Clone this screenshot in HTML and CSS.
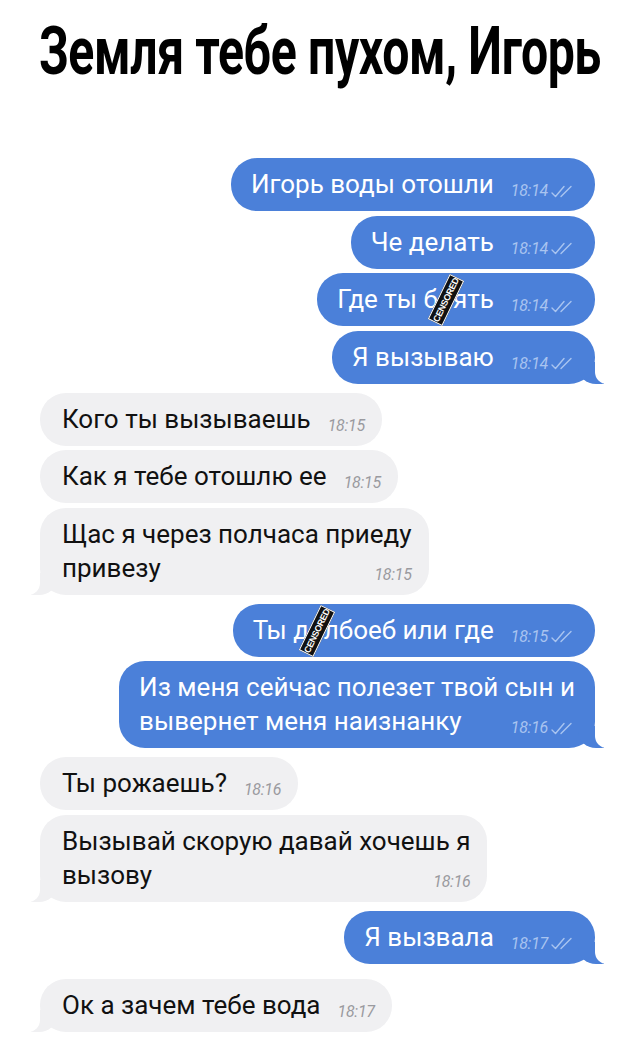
FILE: index.html
```html
<!DOCTYPE html>
<html lang="ru">
<head>
  <meta charset="UTF-8" />
  <meta name="viewport" content="width=device-width, initial-scale=1.0" />
  <title>Земля тебе пухом, Игорь</title>
  <link rel="stylesheet" href="styles.css">
</head>
<body>
  <div class="title-box">
    <h1 class="title">Земля тебе пухом, Игорь</h1>
  </div>

  <div class="chat">
    <div class="group out">
      <div class="bubble">
        <div class="line"><span class="text">Игорь воды отошли</span><span class="time">18:14<svg class="ticks" viewBox="0 0 24 13"><path d="M1 8 L4.5 11.5 L13 1.5 M10 11.5 L20 1.5"/></svg></span></div>
      </div>
      <div class="bubble">
        <div class="line"><span class="text">Че делать</span><span class="time">18:14<svg class="ticks" viewBox="0 0 24 13"><path d="M1 8 L4.5 11.5 L13 1.5 M10 11.5 L20 1.5"/></svg></span></div>
      </div>
      <div class="bubble">
        <div class="line"><span class="text">Где ты б<span class="censor-wrap">л<span class="censored">CENSORED</span></span>ять</span><span class="time">18:14<svg class="ticks" viewBox="0 0 24 13"><path d="M1 8 L4.5 11.5 L13 1.5 M10 11.5 L20 1.5"/></svg></span></div>
      </div>
      <div class="bubble tail">
        <div class="line"><span class="text">Я вызываю</span><span class="time">18:14<svg class="ticks" viewBox="0 0 24 13"><path d="M1 8 L4.5 11.5 L13 1.5 M10 11.5 L20 1.5"/></svg></span></div>
      </div>
    </div>

    <div class="group in">
      <div class="bubble">
        <div class="line"><span class="text">Кого ты вызываешь</span><span class="time">18:15</span></div>
      </div>
      <div class="bubble">
        <div class="line"><span class="text">Как я тебе отошлю ее</span><span class="time">18:15</span></div>
      </div>
      <div class="bubble tail">
        <div class="line"><span class="text">Щас я через полчаса приеду</span></div>
        <div class="line"><span class="text">привезу</span><span class="time">18:15</span></div>
      </div>
    </div>

    <div class="group out">
      <div class="bubble">
        <div class="line"><span class="text">Ты д<span class="censor-wrap">о<span class="censored">CENSORED</span></span>лбоеб или где</span><span class="time">18:15<svg class="ticks" viewBox="0 0 24 13"><path d="M1 8 L4.5 11.5 L13 1.5 M10 11.5 L20 1.5"/></svg></span></div>
      </div>
      <div class="bubble tail">
        <div class="line"><span class="text">Из меня сейчас полезет твой сын и</span></div>
        <div class="line"><span class="text">вывернет меня наизнанку</span><span class="time">18:16<svg class="ticks" viewBox="0 0 24 13"><path d="M1 8 L4.5 11.5 L13 1.5 M10 11.5 L20 1.5"/></svg></span></div>
      </div>
    </div>

    <div class="group in">
      <div class="bubble">
        <div class="line"><span class="text">Ты рожаешь?</span><span class="time">18:16</span></div>
      </div>
      <div class="bubble tail">
        <div class="line"><span class="text">Вызывай скорую давай хочешь я</span></div>
        <div class="line"><span class="text">вызову</span><span class="time">18:16</span></div>
      </div>
    </div>

    <div class="group out">
      <div class="bubble tail">
        <div class="line"><span class="text">Я вызвала</span><span class="time">18:17<svg class="ticks" viewBox="0 0 24 13"><path d="M1 8 L4.5 11.5 L13 1.5 M10 11.5 L20 1.5"/></svg></span></div>
      </div>
    </div>

    <div class="group in last">
      <div class="bubble tail">
        <div class="line"><span class="text">Ок а зачем тебе вода</span><span class="time">18:17</span></div>
      </div>
    </div>
  </div>
</body>
</html>
```

FILE: styles.css
```css
body {
  margin: 0;
  background-color: #fff;
  font-family: Roboto, "Liberation Sans", sans-serif;
  color: #111;
}

.title-box {
  display: flex;
  justify-content: center;
  height: 158px;
  padding-top: 12px;
  box-sizing: border-box;
}

.title {
  flex: none;
  margin: 0;
  white-space: nowrap;
  font-family: Roboto, "Liberation Sans", sans-serif;
  font-weight: bold;
  font-size: 66px;
  line-height: 80px;
  letter-spacing: -0.5px;
  color: #000;
  transform: scaleX(0.73);
}

.chat {
  padding: 0 45px 0 40px;
}

.group {
  display: flex;
  flex-direction: column;
  gap: 4.5px;
  margin-bottom: 9px;
}

.group.last {
  margin-top: 15px;
}

.group.out {
  align-items: flex-end;
}

.group.in {
  align-items: flex-start;
}

.bubble {
  position: relative;
  padding: 11px 20px;
  border-radius: 26px;
  font-size: 26px;
  line-height: 31px;
  white-space: nowrap;
}

.out .bubble {
  background-color: #4b80d9;
  color: #fff;
}

.in .bubble {
  background-color: #f0f0f2;
  color: #111;
  padding-left: 22px;
  padding-right: 17px;
}

.line {
  display: flex;
  align-items: flex-end;
  justify-content: space-between;
}

.line + .line {
  margin-top: 3px;
}

.time {
  display: inline-flex;
  align-items: center;
  margin-left: 17px;
  margin-bottom: 0;
  font-size: 16px;
  line-height: 18px;
  font-style: italic;
  letter-spacing: -0.3px;
}

.out .time {
  color: #a9c4f0;
}

.in .time {
  color: #9a9a9f;
}

.ticks {
  width: 24px;
  height: 13px;
  margin-left: 3px;
}

.ticks path {
  fill: none;
  stroke: #a9c4f0;
  stroke-width: 1.4;
  stroke-linecap: round;
  stroke-linejoin: round;
}

/* хвостики у последних сообщений */
.bubble.tail::before,
.bubble.tail::after {
  content: "";
  position: absolute;
  bottom: 0;
  height: 22px;
}

.out .bubble.tail::before {
  right: -9px;
  width: 26px;
  background-color: #4b80d9;
  border-bottom-left-radius: 18px 16px;
}

.out .bubble.tail::after {
  right: -12px;
  width: 12px;
  background-color: #fff;
  border-bottom-left-radius: 12px;
}

.in .bubble.tail::before {
  left: -9px;
  width: 26px;
  background-color: #f0f0f2;
  border-bottom-right-radius: 18px 16px;
}

.in .bubble.tail::after {
  left: -12px;
  width: 12px;
  background-color: #fff;
  border-bottom-right-radius: 12px;
}

.censor-wrap {
  position: relative;
}

.censored {
  position: absolute;
  left: 50%;
  top: 50%;
  width: 48px;
  height: 14px;
  margin-left: -24px;
  margin-top: -7px;
  transform: rotate(-64deg);
  background-color: #111;
  color: #fff;
  font-family: "Liberation Sans", sans-serif;
  font-weight: bold;
  font-size: 9px;
  line-height: 14px;
  text-align: center;
  letter-spacing: -0.4px;
  border: 1px solid #fff;
}
```
